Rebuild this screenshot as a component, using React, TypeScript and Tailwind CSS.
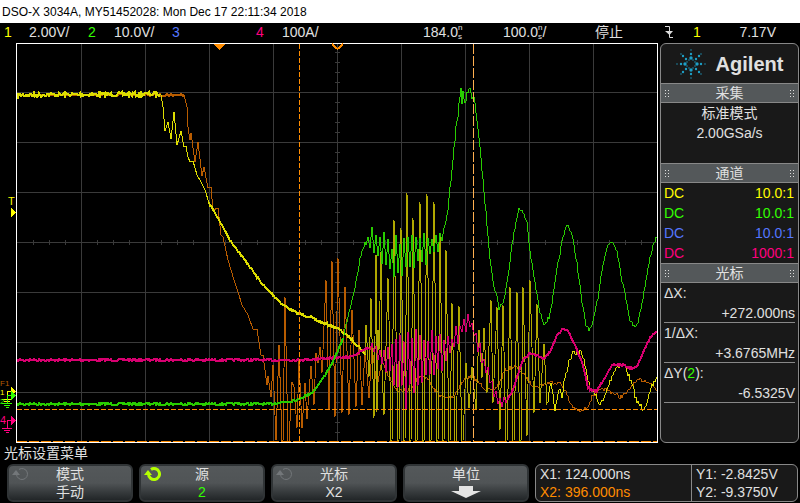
import type { ReactNode } from 'react';
import clsx from 'clsx';

// [x, y] or [x, y, noise amplitude]
type Knot = [number, number, number?];

const GRID_X = [81, 145, 209, 273, 337, 401, 465, 529, 593];
const GRID_Y = [92, 142, 192, 242, 292, 342, 392];

const CH1_HEAD: Knot[] = [
  [160, 94], [161, 95], [163, 107], [165, 131], [168, 122], [171, 139], [174, 112], [177, 145],
  [181, 131], [184, 147], [186, 146], [188, 157], [190, 162], [193, 161], [197, 175], [200, 180],
  [205, 190], [209, 203],
];

const CH1_SLOPE: Knot[] = [
  [209, 203], [218, 218], [230, 240], [247, 263], [263, 285], [273, 295], [283, 305], [297, 313],
  [310, 317], [323, 323], [337, 328], [350, 338], [360, 348], [365, 355],
];

const CH1_BURST: Knot[] = [
  [365, 355], [366, 325], [369, 377], [371, 298], [374, 418], [376, 255], [377, 412], [378, 330],
  [379, 350], [381, 252], [382, 370], [384, 415], [388, 278], [389, 320], [391, 441], [392, 441],
  [394, 220], [398, 441], [399, 441], [401, 228], [404, 441], [405, 441], [407, 193], [410, 441],
  [411, 441], [413, 218], [416, 441], [417, 441], [420, 202], [423, 441], [424, 441], [427, 194],
  [430, 441], [431, 441], [434, 202], [437, 441], [438, 441], [440, 233], [443, 441], [444, 441],
  [446, 250], [449, 441], [450, 441], [452, 303], [455, 441], [456, 441], [459, 306], [462, 441],
  [463, 441], [466, 363], [469, 408], [472, 367], [476, 410], [479, 330], [482, 378], [484, 328],
  [487, 393], [491, 300], [493, 403], [497, 307], [500, 430], [503, 305], [506, 441], [507, 441],
  [510, 287], [513, 441], [514, 441], [517, 292], [520, 441], [521, 441], [523, 287], [527, 436],
  [530, 280], [534, 413], [537, 304], [540, 403], [544, 344], [547, 405],
];

const CH1_TAIL: Knot[] = [
  [547, 405], [551, 382], [555, 409], [559, 388], [562, 397], [565, 377], [568, 365], [573, 350],
  [577, 353], [580, 351], [585, 363], [590, 390], [595, 393], [598, 403], [603, 402], [608, 387],
  [613, 373], [618, 365], [625, 365], [632, 385], [637, 402], [643, 408], [648, 400], [652, 387],
  [657, 377],
];

const CH2_RISE: Knot[] = [
  [17, 404], [270, 404], [283, 402], [297, 400], [313, 392], [323, 378], [333, 362], [343, 338],
];

const CH2: Knot[] = [
  [343, 338], [350, 308], [355, 287], [360, 260], [363, 247], [368, 240, 4], [372, 242, 16],
  [378, 246, 18], [388, 255, 24], [395, 262, 28], [402, 258, 28], [410, 250, 22], [418, 250, 22],
  [425, 250, 18], [435, 245, 14], [440, 240, 8], [445, 228, 3], [448, 213, 3], [449, 197, 3],
  [451, 180, 3], [456, 128, 3], [458, 115, 3], [459, 105], [461, 90], [462, 102], [463, 90],
  [465, 105], [467, 93], [470, 87], [472, 100], [474, 97], [476, 112], [478, 128], [483, 180],
  [490, 257], [493, 282], [497, 297], [499, 308, 3], [502, 303, 3], [504, 300], [508, 277],
  [512, 243], [516, 223], [519, 207], [523, 213], [527, 222], [530, 252], [535, 283], [540, 313],
  [544, 323], [549, 318], [553, 297], [557, 270], [562, 242], [567, 223], [572, 235], [577, 263],
  [582, 303], [586, 325], [590, 330], [593, 323], [598, 297], [603, 263], [608, 245], [612, 241],
  [617, 250], [622, 280], [627, 303], [630, 320], [634, 327], [638, 322], [642, 303], [647, 275],
  [651, 253], [654, 242], [657, 237],
];

const CH4_FLAT: Knot[] = [[17, 360], [300, 360], [330, 358], [350, 357], [360, 352], [368, 348]];

const CH4: Knot[] = [
  [368, 348, 4], [373, 347, 6], [380, 357, 8], [390, 363, 18], [397, 368, 32], [405, 368, 44],
  [413, 368, 42], [423, 360, 32], [433, 353, 24], [443, 355, 20], [450, 347, 14], [457, 337, 12],
  [463, 327, 7], [468, 322, 9], [473, 327, 7], [477, 343, 8], [482, 357, 10], [487, 372, 10],
  [493, 388, 9], [498, 400, 8], [502, 402, 6], [507, 400, 5],
];

const CH4_TAIL: Knot[] = [
  [507, 400], [512, 392], [517, 377], [523, 360], [530, 353], [537, 355], [543, 359], [550, 352],
  [557, 335], [563, 329], [568, 331], [575, 345], [582, 362], [588, 387], [592, 391], [597, 391],
  [602, 382], [608, 372], [613, 365], [623, 365], [630, 368], [637, 367], [642, 355], [648, 342],
  [653, 333], [657, 332],
];

const REF_FALL: Knot[] = [
  [184, 95], [187, 107], [188, 127], [190, 140], [191, 133], [195, 162], [198, 142], [202, 176],
  [204, 167], [208, 188], [211, 187], [213, 210], [218, 208], [221, 235], [223, 237], [228, 260],
  [234, 280], [238, 292], [242, 305], [248, 315], [253, 329], [257, 329], [261, 355], [263, 355],
  [267, 385], [268, 376], [271, 397], [273, 365], [276, 440], [279, 345], [282, 441], [283, 441],
  [285, 297], [288, 441], [289, 441], [292, 382], [294, 387], [297, 428], [299, 360], [302, 428],
  [305, 383], [307, 419], [311, 366], [314, 405], [316, 353], [318, 363], [320, 347], [322, 373],
  [326, 280], [329, 410], [332, 261], [335, 417], [338, 258], [342, 413], [345, 287], [349, 415],
  [352, 310], [356, 407], [359, 330], [362, 405], [365, 350], [369, 398], [372, 347], [377, 387],
  [382, 360], [387, 373],
];

const REF_TAIL: Knot[] = [
  [387, 373], [397, 390], [410, 390], [418, 377], [427, 377], [433, 388], [440, 395], [447, 398],
  [454, 396], [460, 385], [465, 379], [472, 376], [478, 382], [487, 390], [493, 391], [500, 382],
  [505, 370], [515, 366], [522, 372], [530, 383], [537, 387], [543, 384], [553, 382], [560, 383],
  [565, 390], [570, 403], [575, 409], [581, 412], [587, 407], [593, 395], [603, 389], [610, 391],
  [620, 397], [627, 393], [633, 384], [640, 380], [648, 381], [653, 386], [657, 390],
];

const line = (knots: Knot[]) => knots.map(([x, y]) => `${x},${y}`).join(' ');

// walks the knots one column at a time and adds repeatable noise,
// strong noise swings up and down around the knots every second column
function noisy(knots: Knot[], base = 1) {
  let seed = 7;
  const out: string[] = [];
  for (let i = 0; i < knots.length - 1; i++) {
    const [x0, y0, a0 = base] = knots[i];
    const [x1, y1, a1 = base] = knots[i + 1];
    for (let x = x0; x < x1; x++) {
      const t = (x - x0) / (x1 - x0);
      seed = (seed * 16807) % 2147483647;
      const r = seed / 2147483647;
      const amp = a0 + (a1 - a0) * t;
      const burst = amp > 3;
      if (burst && x % 2) continue;
      const offset = burst ? (x % 4 ? 1 : -1) * amp * (0.35 + 0.65 * r) : (r * 2 - 1) * amp;
      out.push(`${x},${Math.round(y0 + (y1 - y0) * t + offset)}`);
    }
  }
  const last = knots[knots.length - 1];
  out.push(`${last[0]},${last[1]}`);
  return out.join(' ');
}

function Ground({ x, y, color }: { x: number; y: number; color: string }) {
  return (
    <path
      d={`M${x + 4} ${y}H${x}V${y + 8}M${x - 5} ${y + 8}h10M${x - 3} ${y + 10}h6M${x - 1} ${y + 12}h3`}
      stroke={color}
      fill="none"
    />
  );
}

function Waveforms() {
  return (
    <svg
      viewBox="0 43 659 400"
      className="block w-full h-auto"
      fill="none"
      shapeRendering="crispEdges"
      role="img"
      aria-label="波形"
    >
      <g stroke="#3a3a3a">
        {GRID_X.map((x) => (
          <path key={x} d={`M${x + 0.5} 44V442`} />
        ))}
        {GRID_Y.map((y) => (
          <path key={y} d={`M17 ${y + 0.5}H657`} />
        ))}
        {Array.from({ length: 39 }, (_, i) => (
          <path key={i} d={`M335 ${52.5 + i * 10}h5`} />
        ))}
        {Array.from({ length: 39 }, (_, i) => (
          <path key={i} d={`M${33.5 + i * 16} 240v5`} />
        ))}
      </g>

      <g stroke="#b85c00">
        <polyline points={noisy([[17, 95], [184, 95]])} strokeWidth="2" />
        <polyline points={line(REF_FALL)} />
        <polyline points={noisy(REF_TAIL, 2)} />
      </g>
      <g stroke="#dddd00">
        <polyline points={noisy([[17, 95], [160, 94]], 2)} strokeWidth="2" />
        <polyline points={line(CH1_HEAD)} />
        <polyline points={noisy(CH1_SLOPE)} strokeWidth="2" />
        <polyline points={line(CH1_BURST)} stroke="#b0a800" />
        <polyline points={noisy(CH1_TAIL, 3)} />
      </g>
      <g stroke="#d80070">
        <polyline points={noisy(CH4_FLAT)} strokeWidth="2" />
        <polyline points={noisy(CH4)} />
        <polyline points={noisy(CH4_TAIL)} strokeWidth="2" />
      </g>
      <g stroke="#28cc00">
        <polyline points={noisy(CH2_RISE)} strokeWidth="2" />
        <polyline points={noisy(CH2, 2)} />
      </g>

      <path d="M299.5 44V442" stroke="#ff8c00" strokeDasharray="5 2" />
      <path d="M473.5 44V442" stroke="#ffb050" strokeDasharray="10 2" />
      <path d="M17 409.5H657" stroke="#ff8c00" strokeDasharray="5 2" />
      <path d="M17 441.5H657" stroke="#ff8c00" strokeDasharray="10 2" />

      <path d="M16.5 442.5V43.5H657.5V442.5Z" stroke="#fff" />
      <path d="M214 44h11l-5.5 6z" fill="#ff8c00" />
      <path d="M332 44l5.500 5 5.500-5" stroke="#ff8c00" strokeWidth="2" />

      <g fontFamily="Liberation Sans, sans-serif">
        <text x="8" y="205" fontSize="11" fill="#ff0">T</text>
        <path d="M11 208l5 4.500-5 4.500z" fill="#ff0" />
        <text x="0" y="386" fontSize="8" fill="#b85c00">F1</text>
        <text x="0" y="395" fontSize="8" fill="#ff0">1</text>
        <path d="M11 387l5 4.500-5 4.500z" fill="#ff0" />
        <Ground x={7} y={391} color="#ffff00" />
        <text x="0" y="404" fontSize="8" fill="#3f0">2</text>
        <path d="M11 391l5 4.500-5 4.500z" fill="#3f0" />
        <Ground x={7} y={395} color="#33ff00" />
        <text x="0" y="424" fontSize="11" fill="#ff0080">4</text>
        <path d="M11 416l5 4.500-5 4.500z" fill="#ff0080" />
        <Ground x={7} y={420} color="#ff0080" />
      </g>
    </svg>
  );
}

function StackedUnit() {
  return (
    <span className="flex flex-col text-[8px] leading-[9px]">
      <span>n</span>
      <span>s</span>
    </span>
  );
}

function StatusBar() {
  return (
    <div className="flex h-5 items-center pb-0.5 pl-1 leading-4">
      <span className="w-[25px] text-[#ff0]">1</span>
      <span className="w-[59px]">2.00V/</span>
      <span className="w-[26px] text-[#3f0]">2</span>
      <span className="w-[58px]">10.0V/</span>
      <span className="w-[84px] text-[#57f]">3</span>
      <span className="w-[26px] text-[#ff0080]">4</span>
      <span className="w-[141px]">100A/</span>
      <span className="flex w-20 items-center">184.0<StackedUnit /></span>
      <span className="flex w-[92px] items-center">100.0<StackedUnit />/</span>
      <span className="w-[70px]">停止</span>
      <svg viewBox="0 0 8 12" className="h-3 w-2" fill="none" stroke="#ddd" aria-label="下降沿">
        <path d="M0 .5h4.500v11H8" />
        <path d="M0 5h8L4.500 9z" fill="#ddd" stroke="none" />
      </svg>
      <span className="ml-5 flex-1 text-[#ff0]">1</span>
      <span className="pr-6">7.17V</span>
    </div>
  );
}

const LOGO_DOTS = [
  [0, 6, 3], [0, 10, 2], [0, 14, 1],
  [5, 5, 2], [8, 8, 2], [10, 10, 1],
  [2, 4, 1], [-2, 4, 1],
];

function Logo() {
  return (
    <svg viewBox="-15 -15 30 30" className="size-[30px]" fill="#1e9fc6" aria-hidden="true">
      {[0, 90, 180, 270].map((angle) => (
        <g key={angle} transform={`rotate(${angle})`}>
          {LOGO_DOTS.map(([x, y, size]) => (
            <circle key={`${x}-${y}`} cx={x} cy={y} r={size === 1 ? 0.7 : size === 2 ? 1.2 : 1.7} />
          ))}
        </g>
      ))}
    </svg>
  );
}

function Grip() {
  return (
    <svg viewBox="0 0 4 7" className="h-[7px] w-1" fill="#ddd" shapeRendering="crispEdges" aria-hidden="true">
      {[0, 3, 6].map((y) => (
        <path key={y} d={`M0 ${y}h1v1h-1zM3 ${y}h1v1h-1z`} />
      ))}
    </svg>
  );
}

function SectionTitle({ children }: { children: ReactNode }) {
  return (
    <h2 className="flex h-5 items-center justify-between border-y border-[#888] bg-[#54585a] px-1 leading-4">
      <Grip />
      {children}
      <Grip />
    </h2>
  );
}

const PROBES = [
  { id: 1, ratio: '10.0:1', color: 'text-[#ff0]' },
  { id: 2, ratio: '10.0:1', color: 'text-[#3f0]' },
  { id: 3, ratio: '10.0:1', color: 'text-[#57f]' },
  { id: 4, ratio: '1000:1', color: 'text-[#ff0080]' },
];

const CURSORS = [
  { id: 'dx', label: <>ΔX:</>, value: '+272.000ns' },
  { id: 'fx', label: <>1/ΔX:</>, value: '+3.6765MHz' },
  { id: 'dy', label: <>ΔY(<span className="text-[#3f0]">2</span>):</>, value: '-6.5325V' },
];

function SidePanel() {
  return (
    <aside className="w-[139px] shrink-0 overflow-hidden rounded-md border border-[#888] bg-[#191919]">
      <div className="flex h-[39px] items-center justify-center gap-2.5">
        <Logo />
        <span className="text-xl font-bold">Agilent</span>
      </div>
      <SectionTitle>采集</SectionTitle>
      <div className="h-[60px] text-center leading-5">
        <p>标准模式</p>
        <p>2.00GSa/s</p>
      </div>
      <SectionTitle>通道</SectionTitle>
      <table className="w-full">
        <tbody>
          {PROBES.map((probe) => (
            <tr key={probe.id} className={clsx('h-5 leading-5', probe.color)}>
              <td className="pl-[3px]">DC</td>
              <td className="pr-1 text-right">{probe.ratio}</td>
            </tr>
          ))}
        </tbody>
      </table>
      <SectionTitle>光标</SectionTitle>
      <dl className="px-[3px] leading-5">
        {CURSORS.map((cursor) => (
          <div key={cursor.id} className="h-10 border-b border-[#888]">
            <dt className="h-5">{cursor.label}</dt>
            <dd className="h-5 text-right">{cursor.value}</dd>
          </div>
        ))}
      </dl>
    </aside>
  );
}

function KnobIcon({ active }: { active: boolean }) {
  return (
    <svg
      viewBox="0 0 18 16"
      className="absolute left-0.5 top-0 h-4 w-[18px]"
      fill="none"
      stroke={active ? '#b4ff00' : '#73777a'}
      strokeWidth={active ? 3 : 1}
      aria-hidden="true"
    >
      <path d="M8 3.400A5.500 5.500 0 1 1 5.500 8" />
      <path d="M1 9l4-5 4 5z" fill={active ? '#b4ff00' : '#73777a'} stroke="none" />
    </svg>
  );
}

const SOFTKEYS = [
  { label: '模式', value: '手动', knob: true },
  { label: '源', value: '2', knob: true, active: true },
  { label: '光标', value: 'X2', knob: true },
  { label: '单位' },
];

function Softkeys() {
  return (
    <div className="flex flex-1 gap-1.5">
      {SOFTKEYS.map((key) => (
        <button
          key={key.label}
          className="relative flex h-[38px] flex-1 flex-col items-center rounded-md border-2 border-[#303436] bg-linear-to-b from-[#54585a] via-[#505456] to-[#222628]"
        >
          {key.knob && <KnobIcon active={!!key.active} />}
          <span className="leading-4">{key.label}</span>
          {key.value ? (
            <span className={clsx('leading-5', key.active && 'text-[#3f0]')}>{key.value}</span>
          ) : (
            <svg viewBox="0 0 30 12" className="mt-1 h-3 w-[30px]" fill="#e4e4e4" aria-hidden="true">
              <path d="M8 0h14v5h8L15 12 0 5h8z" />
            </svg>
          )}
        </button>
      ))}
    </div>
  );
}

export default function App() {
  return (
    <div className="min-h-screen bg-black font-['Liberation_Sans','Noto_Sans_CJK_SC',sans-serif] text-sm text-[#e0e0e0]">
      <h1 className="h-[23px] bg-white pl-0.5 text-xs leading-6 text-black">
        DSO-X 3034A, MY51452028: Mon Dec 17 22:11:34 2018
      </h1>
      <StatusBar />
      <main className="flex pr-px">
        <div className="min-w-0 flex-1 pr-px">
          <Waveforms />
        </div>
        <SidePanel />
      </main>
      <p className="h-[21px] pl-1 leading-5">光标设置菜单</p>
      <footer className="flex gap-1.5 pl-[7px] pr-0.5">
        <Softkeys />
        <div className="flex h-[38px] w-[263px] overflow-hidden rounded-md border border-[#888] bg-[#191919] leading-[18px]">
          <div className="flex-1 pl-1">
            <p>X1: 124.000ns</p>
            <p className="text-[#ff8c00]">X2: 396.000ns</p>
          </div>
          <div className="w-[106px] border-l border-[#888] pl-1">
            <p>Y1: -2.8425V</p>
            <p>Y2: -9.3750V</p>
          </div>
        </div>
      </footer>
    </div>
  );
}
